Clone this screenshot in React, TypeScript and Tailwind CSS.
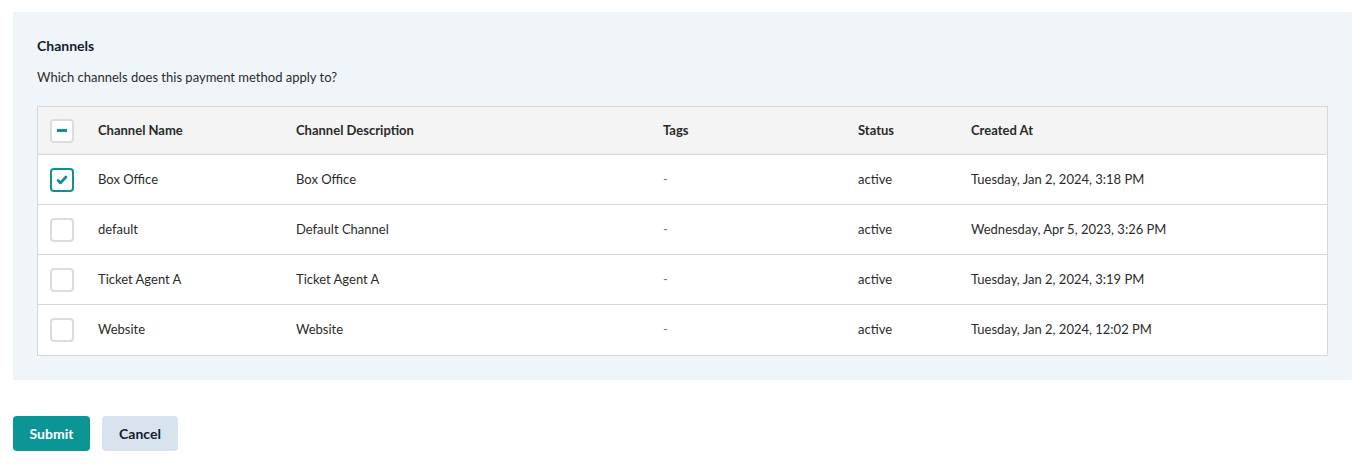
import React from "react";

const rows = [
  { name: "Box Office", description: "Box Office", tags: "-", status: "active", created: "Tuesday, Jan 2, 2024, 3:18 PM", checked: true },
  { name: "default", description: "Default Channel", tags: "-", status: "active", created: "Wednesday, Apr 5, 2023, 3:26 PM", checked: false },
  { name: "Ticket Agent A", description: "Ticket Agent A", tags: "-", status: "active", created: "Tuesday, Jan 2, 2024, 3:19 PM", checked: false },
  { name: "Website", description: "Website", tags: "-", status: "active", created: "Tuesday, Jan 2, 2024, 12:02 PM", checked: false },
];

function Checkbox({ state }: { state: "checked" | "unchecked" | "indeterminate" }) {
  if (state === "checked") {
    return (
      <span className="flex h-6 w-6 items-center justify-center rounded-[4px] border-2 border-[#10918f] bg-white">
        <svg viewBox="0 0 16 16" className="h-3.5 w-3.5" fill="none" stroke="#10918f" strokeWidth={3.2} strokeLinecap="round" strokeLinejoin="round">
          <path d="M3.5 8.5l2.8 2.8L12.5 4.5" />
        </svg>
      </span>
    );
  }
  return (
    <span className="flex h-6 w-6 items-center justify-center rounded-[4px] border-2 border-[#dcdcdc] bg-white">
      {state === "indeterminate" && <span className="h-[3px] w-2.5 bg-[#10918f]" />}
    </span>
  );
}

export default function App() {
  return (
    <div className="min-h-[470px] bg-white pt-3 font-['Lato',sans-serif] text-[13px] text-[#2b2b2b]">
      <section className="mx-[13px] bg-[#f0f5fa] px-6 pb-6 pt-6">
        <h2 className="text-sm font-bold leading-5 text-[#141c2e]">Channels</h2>
        <p className="mt-[11px] leading-5">Which channels does this payment method apply to?</p>

        <div className="mt-[19px] border border-[#d7d7d7] bg-white">
          <div className="flex h-[48px] items-center border-b border-[#d7d7d7] bg-[#f4f4f4] font-bold text-[#2a2a2a]">
            <div className="w-[60px] pl-3">
              <Checkbox state="indeterminate" />
            </div>
            <div className="w-[198px]">Channel Name</div>
            <div className="w-[367px]">Channel Description</div>
            <div className="w-[195px]">Tags</div>
            <div className="w-[113px]">Status</div>
            <div className="flex-1">Created At</div>
          </div>
          {rows.map((row, i) => (
            <div
              key={row.name}
              className={`flex h-[50px] items-center ${i < rows.length - 1 ? "border-b border-[#d7d7d7]" : ""}`}
            >
              <div className="w-[60px] pl-3">
                <Checkbox state={row.checked ? "checked" : "unchecked"} />
              </div>
              <div className="w-[198px]">{row.name}</div>
              <div className="w-[367px]">{row.description}</div>
              <div className="w-[195px] text-[#777]">{row.tags}</div>
              <div className="w-[113px]">{row.status}</div>
              <div className="flex-1">{row.created}</div>
            </div>
          ))}
        </div>
      </section>

      <div className="mt-9 flex gap-3 px-[13px]">
        <button className="h-[35px] w-[77px] rounded-[4px] bg-[#0c9595] text-sm font-bold text-white">Submit</button>
        <button className="h-[35px] w-[76px] rounded-[4px] bg-[#d9e3ef] text-sm font-bold text-[#141c2e]">Cancel</button>
      </div>
    </div>
  );
}
